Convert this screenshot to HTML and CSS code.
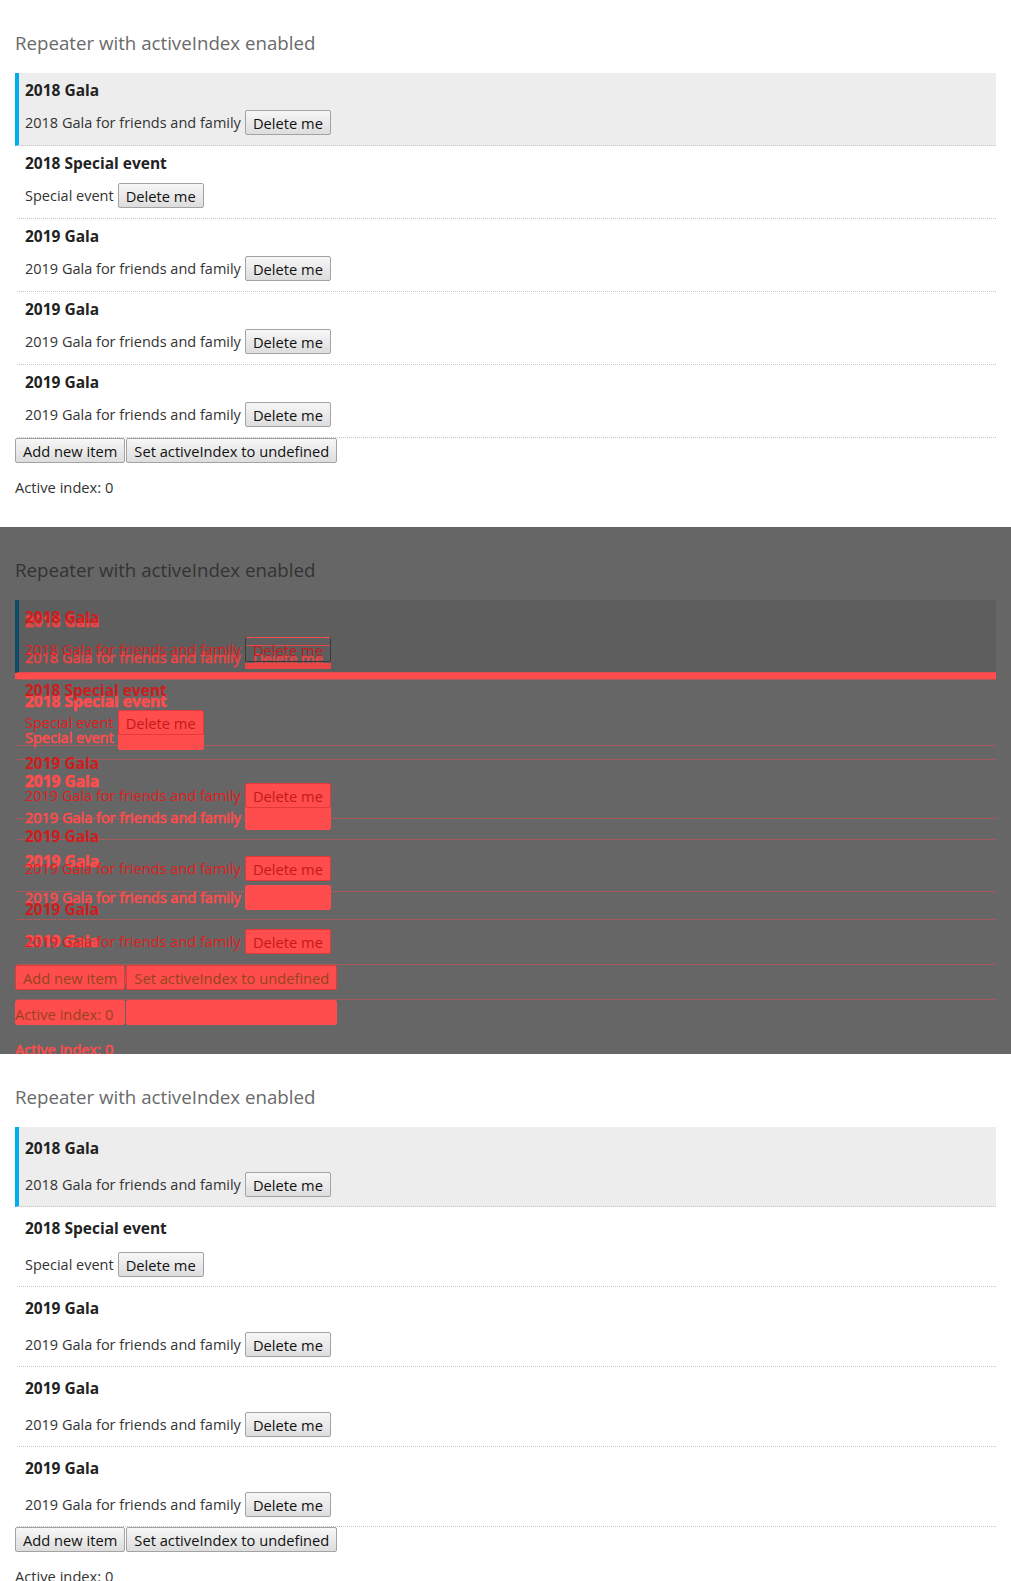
FILE: index.html
```html
<!DOCTYPE html>
<html>
<head>
<meta charset="utf-8">
<link rel="stylesheet" href="styles.css">
</head>
<body>
<section class="panel">
  <div class="page">
    <h2 class="title">Repeater with activeIndex enabled</h2>
    <ul class="list">
      <li class="item active"><div class="item-title">2018 Gala</div><div class="item-row"><span>2018 Gala for friends and family</span><button class="btn">Delete me</button></div></li>
      <li class="item"><div class="item-title">2018 Special event</div><div class="item-row"><span>Special event</span><button class="btn">Delete me</button></div></li>
      <li class="item"><div class="item-title">2019 Gala</div><div class="item-row"><span>2019 Gala for friends and family</span><button class="btn">Delete me</button></div></li>
      <li class="item"><div class="item-title">2019 Gala</div><div class="item-row"><span>2019 Gala for friends and family</span><button class="btn">Delete me</button></div></li>
      <li class="item"><div class="item-title">2019 Gala</div><div class="item-row"><span>2019 Gala for friends and family</span><button class="btn">Delete me</button></div></li>
    </ul>
    <div class="actions"><button class="btn">Add new item</button><button class="btn">Set activeIndex to undefined</button></div>
    <p class="status">Active index: 0</p>
  </div>
</section>

<section class="panel diff">
  <div class="page old">
    <h2 class="title">Repeater with activeIndex enabled</h2>
    <ul class="list">
      <li class="item active"><div class="item-title">2018 Gala</div><div class="item-row"><span>2018 Gala for friends and family</span><button class="btn ghost">Delete me</button></div></li>
      <li class="item"><div class="item-title">2018 Special event</div><div class="item-row"><span>Special event</span><button class="btn">Delete me</button></div></li>
      <li class="item"><div class="item-title">2019 Gala</div><div class="item-row"><span>2019 Gala for friends and family</span><button class="btn">Delete me</button></div></li>
      <li class="item"><div class="item-title">2019 Gala</div><div class="item-row"><span>2019 Gala for friends and family</span><button class="btn">Delete me</button></div></li>
      <li class="item"><div class="item-title">2019 Gala</div><div class="item-row"><span>2019 Gala for friends and family</span><button class="btn">Delete me</button></div></li>
    </ul>
    <div class="actions"><button class="btn">Add new item</button><button class="btn">Set activeIndex to undefined</button></div>
    <p class="status">Active index: 0</p>
  </div>
  <div class="page loose new">
    <h2 class="title">Repeater with activeIndex enabled</h2>
    <ul class="list">
      <li class="item active"><div class="item-title">2018 Gala</div><div class="item-row"><span>2018 Gala for friends and family</span><button class="btn ghost">Delete me</button></div></li>
      <li class="item"><div class="item-title">2018 Special event</div><div class="item-row"><span>Special event</span><button class="btn">Delete me</button></div></li>
      <li class="item"><div class="item-title">2019 Gala</div><div class="item-row"><span>2019 Gala for friends and family</span><button class="btn">Delete me</button></div></li>
      <li class="item"><div class="item-title">2019 Gala</div><div class="item-row"><span>2019 Gala for friends and family</span><button class="btn">Delete me</button></div></li>
      <li class="item"><div class="item-title">2019 Gala</div><div class="item-row"><span>2019 Gala for friends and family</span><button class="btn">Delete me</button></div></li>
    </ul>
    <div class="actions"><button class="btn">Add new item</button><button class="btn">Set activeIndex to undefined</button></div>
    <p class="status">Active index: 0</p>
  </div>
</section>

<section class="panel">
  <div class="page loose">
    <h2 class="title">Repeater with activeIndex enabled</h2>
    <ul class="list">
      <li class="item active"><div class="item-title">2018 Gala</div><div class="item-row"><span>2018 Gala for friends and family</span><button class="btn">Delete me</button></div></li>
      <li class="item"><div class="item-title">2018 Special event</div><div class="item-row"><span>Special event</span><button class="btn">Delete me</button></div></li>
      <li class="item"><div class="item-title">2019 Gala</div><div class="item-row"><span>2019 Gala for friends and family</span><button class="btn">Delete me</button></div></li>
      <li class="item"><div class="item-title">2019 Gala</div><div class="item-row"><span>2019 Gala for friends and family</span><button class="btn">Delete me</button></div></li>
      <li class="item"><div class="item-title">2019 Gala</div><div class="item-row"><span>2019 Gala for friends and family</span><button class="btn">Delete me</button></div></li>
    </ul>
    <div class="actions"><button class="btn">Add new item</button><button class="btn">Set activeIndex to undefined</button></div>
    <p class="status">Active index: 0</p>
  </div>
</section>
</body>
</html>
```
FILE: styles.css
```css
html, body {
  margin: 0;
  padding: 0;
  background: #fff;
}
body {
  font-family: "Open Sans", "Noto Sans", sans-serif;
}
.panel {
  height: 527px;
  overflow: hidden;
  background: #fff;
}
.page {
  padding: 31px 15px 0;
}
.title {
  margin: 0 0 18px;
  font: 400 18.7px/24px "Open Sans", sans-serif;
  color: #6a6a6a;
}
.list {
  list-style: none;
  margin: 0;
  padding: 0;
}
.item {
  border-left: 4px solid transparent;
  border-bottom: 1px dotted #c4c4c4;
  padding: 7px 10px 10px 6px;
}
.item.active {
  background: #ededed;
  border-left-color: #00aeef;
}
.item-title {
  font: 700 15.5px/20px "Open Sans", sans-serif;
  color: #222;
  margin-bottom: 10px;
}
.item-row {
  display: flex;
  align-items: center;
  gap: 4px;
  height: 25px;
  font-size: 14.5px;
  color: #333;
}
.btn {
  font: 400 14.7px "Open Sans", sans-serif;
  height: 25px;
  padding: 0 7px;
  margin: 0;
  border: 1px solid #a3a3a3;
  border-radius: 2px;
  background: linear-gradient(#f7f7f7, #dddddd);
  color: #111;
}
.actions {
  display: flex;
  gap: 1px;
}
.status {
  margin: 14px 0 0;
  font: 400 14.7px/20px "Open Sans", sans-serif;
  color: #333;
}

/* second rendering: looser item spacing */
.loose .item {
  padding-top: 11px;
  padding-bottom: 9px;
}
.loose .item-title {
  margin-bottom: 14px;
}

/* diff panel */
.diff {
  position: relative;
  background: #666;
}
.old {
  position: relative;
  z-index: 1;
}
.new {
  position: absolute;
  top: 0;
  left: 0;
  right: 0;
  z-index: 0;
}
.old .title {
  color: #333;
}
.old .item {
  border-bottom-color: #e84c4c;
}
.old .item.active {
  background: rgba(0, 0, 0, 0.08);
  border-left-color: #0b4d69;
}
.old .item-title {
  color: #d01c1c;
}
.old .item-row {
  color: #e01c1c;
}
.old .btn {
  background: #ff4c4c;
  border-color: #e23a3a;
  color: #c41a1a;
}
.old .btn.ghost {
  background: transparent;
  border-color: #3a3a3a;
  border-top-color: #ff4c4c;
  color: #c41a1a;
}
.old .actions .btn {
  color: #93461c;
}
.old .status {
  color: #93461c;
}
.new .title {
  visibility: hidden;
}
.new .item {
  border-bottom-color: #e84c4c;
}
.new .item.active {
  background: linear-gradient(transparent 72px, #ff4c4c 72px);
  border-left-color: transparent;
}
.new .item-title,
.new .item-row,
.new .status {
  color: #ff4c4c;
  -webkit-text-stroke: 0.6px #ff4c4c;
}
.new .btn {
  background: #ff4c4c;
  border-color: #ff4c4c;
  color: #ff4c4c;
}
.new .btn.ghost {
  background: linear-gradient(transparent 17px, #ff4c4c 17px);
  border-color: transparent;
  color: #ff4c4c;
  -webkit-text-stroke: 0.6px #ff4c4c;
}
```
